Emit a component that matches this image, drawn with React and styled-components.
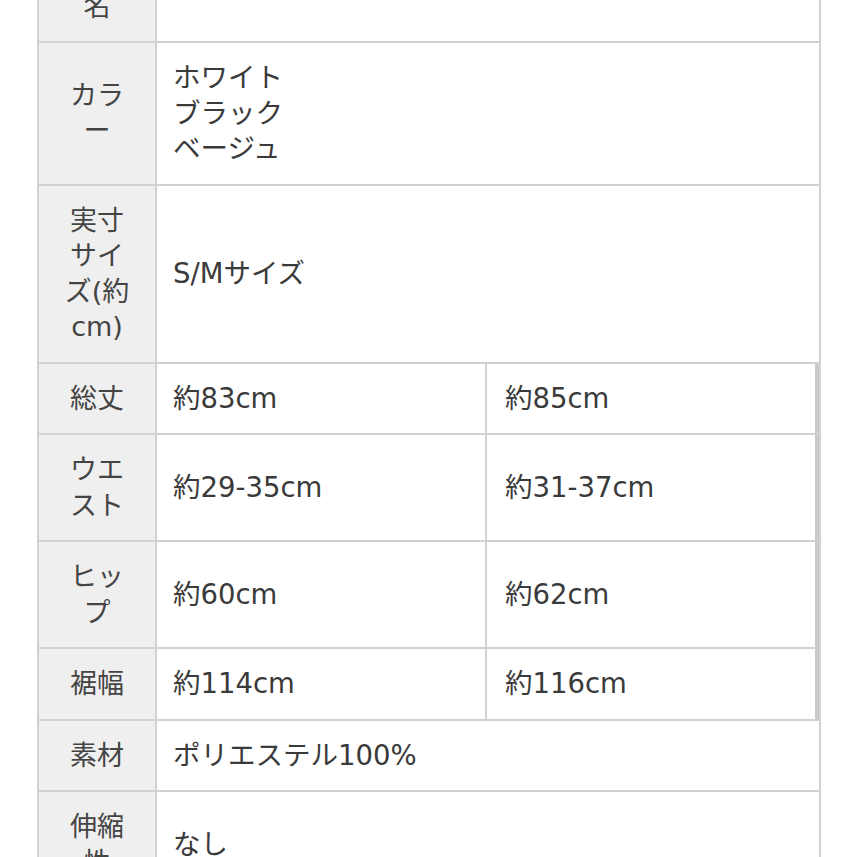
import React from "react";
import styled, { createGlobalStyle } from "styled-components";

const Global = createGlobalStyle`
  html, body {
    margin: 0;
    padding: 0;
    background: #ffffff;
    overflow: hidden;
  }
  body {
    font-family: "DejaVu Sans", "Noto Sans CJK JP", sans-serif;
    color: #3a3a3a;
  }
`;

const Page = styled.div`
  width: 857px;
  height: 857px;
  overflow: hidden;
  padding-left: 37px;
  box-sizing: border-box;
`;

const Table = styled.div`
  width: 784px;
  margin-top: -64px;
  border-left: 2px solid #d2d2d2;
  border-right: 2px solid #d2d2d2;
  box-sizing: border-box;
`;

const Row = styled.div`
  display: grid;
  grid-template-columns: 118px 1fr;
  border-bottom: 2px solid #d2d2d2;
`;

const Label = styled.div`
  background: #efefef;
  border-right: 2px solid #d2d2d2;
  padding: 17px 0;
  font-size: 27px;
  line-height: 35.5px;
  text-align: center;
  display: flex;
  align-items: center;
  justify-content: center;
  color: #444444;
`;

const Value = styled.div`
  padding: 17px 16px;
  font-size: 27.5px;
  line-height: 35.5px;
  display: flex;
  flex-direction: column;
  justify-content: center;
`;

const Split = styled.div`
  display: grid;
  grid-template-columns: 330px 1fr;
`;

const SplitCell = styled.div`
  padding: 17px 18px;
  font-size: 27.5px;
  line-height: 35.5px;
  display: flex;
  align-items: center;
  border-right: ${(p) => (p.$last ? "4px solid #c9c9c9" : "2px solid #d2d2d2")};
  padding-left: ${(p) => (p.$last ? "18px" : "16px")};
`;

const lines = (arr) =>
  arr.map((t, i) => (
    <React.Fragment key={i}>
      {i > 0 && <br />}
      {t}
    </React.Fragment>
  ));

const single = [
  { label: ["商品", "名"], value: ["マーメイドロングスカート"] },
  { label: ["カラ", "ー"], value: ["ホワイト", "ブラック", "ベージュ"] },
  { label: ["実寸", "サイ", "ズ(約", "cm)"], value: ["S/Mサイズ"] },
];

const sizes = [
  { label: ["総丈"], a: "約83cm", b: "約85cm" },
  { label: ["ウエ", "スト"], a: "約29-35cm", b: "約31-37cm" },
  { label: ["ヒッ", "プ"], a: "約60cm", b: "約62cm" },
  { label: ["裾幅"], a: "約114cm", b: "約116cm" },
];

const tail = [
  { label: ["素材"], value: ["ポリエステル100%"] },
  { label: ["伸縮", "性"], value: ["なし"] },
];

export default function App() {
  return (
    <Page>
      <Global />
      <Table>
        {single.map((r, i) => (
          <Row key={"s" + i}>
            <Label>
              <div>{lines(r.label)}</div>
            </Label>
            <Value>
              {r.value.map((v, j) => (
                <div key={j}>{v}</div>
              ))}
            </Value>
          </Row>
        ))}
        {sizes.map((r, i) => (
          <Row key={"z" + i}>
            <Label>
              <div>{lines(r.label)}</div>
            </Label>
            <Split>
              <SplitCell>{r.a}</SplitCell>
              <SplitCell $last>{r.b}</SplitCell>
            </Split>
          </Row>
        ))}
        {tail.map((r, i) => (
          <Row key={"t" + i}>
            <Label>
              <div>{lines(r.label)}</div>
            </Label>
            <Value>
              {r.value.map((v, j) => (
                <div key={j}>{v}</div>
              ))}
            </Value>
          </Row>
        ))}
      </Table>
    </Page>
  );
}
